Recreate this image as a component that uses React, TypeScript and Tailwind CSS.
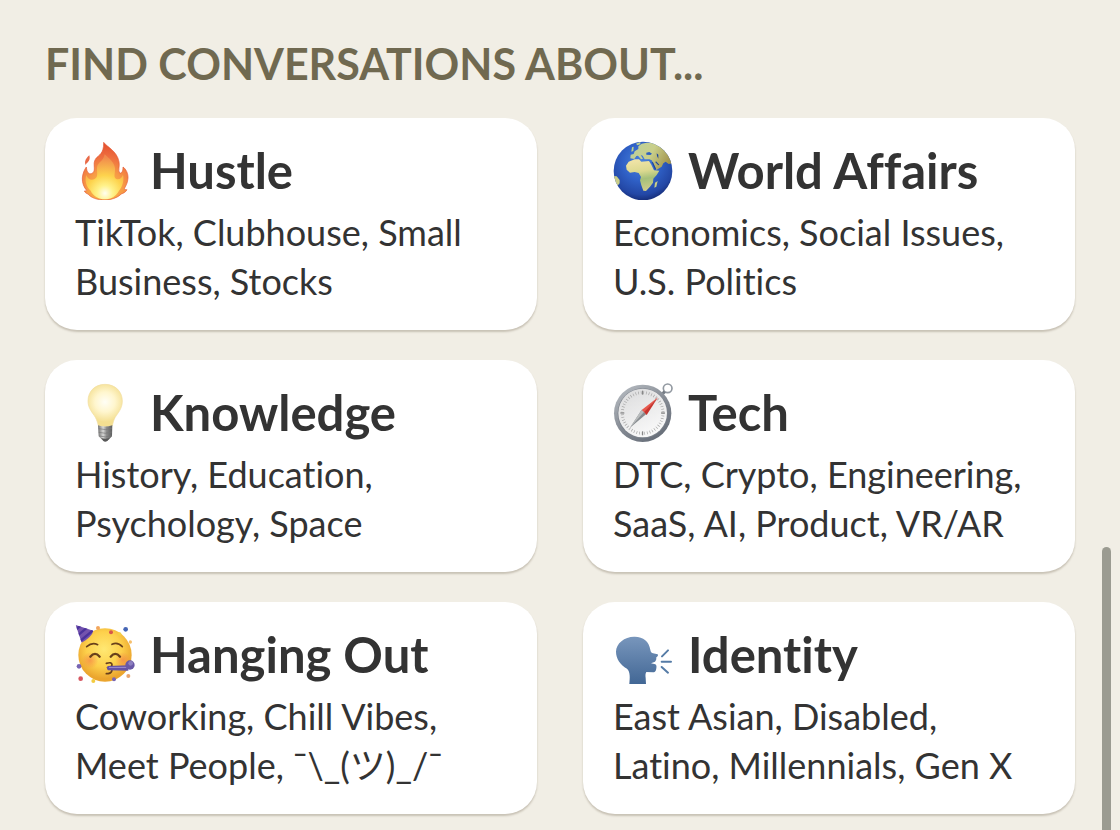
import React from "react";

const FireIcon = () => (
  <svg viewBox="30 24 180 180" className="size-15 shrink-0" aria-hidden="true">
    <defs>
      <radialGradient id="fireOuter" cx="120" cy="170" r="135" gradientUnits="userSpaceOnUse">
        <stop offset="0" stopColor="#fdd04a" />
        <stop offset="0.4" stopColor="#f79a45" />
        <stop offset="0.7" stopColor="#ee7040" />
        <stop offset="1" stopColor="#e5502f" />
      </radialGradient>
      <radialGradient id="fireInner" cx="120" cy="184" r="108" gradientUnits="userSpaceOnUse">
        <stop offset="0" stopColor="#fffef0" />
        <stop offset="0.22" stopColor="#fff28a" />
        <stop offset="0.5" stopColor="#fdd34d" />
        <stop offset="1" stopColor="#f18a4c" />
      </radialGradient>
    </defs>
    <path
      fill="url(#fireOuter)"
      stroke="#e45c3a"
      strokeWidth="2"
      d="M116 31c10 14 40 26 46 58 3 15-4 25 2 34 7 2 10-7 10-18 9 6 16 20 15 34-1 15-8 25-11 31 2 3 6 3 8 3-4 8-12 11-17 13-12 12-32 18-50 18-22 0-42-7-50-18-4-1-9-4-11-9 3 0 6 0 7-2-8-8-14-23-13-37 1-13 6-25 12-33 1 8 2 17 9 20 8 2 15-4 15-14 0-14-3-20 5-32 7-9 24-13 23-48z"
    />
    <path
      fill="url(#fireInner)"
      d="M119 67c12 11 30 25 31 42 1 16-6 27 4 32 9 4 17-5 20-13 4 18-2 36-12 48-9 17-25 26-42 26-19 0-36-10-43-26-12-10-19-29-13-47 4 12 15 18 25 12 12-7 6-20 7-34 1-16 20-19 23-40z"
    />
    <path fill="#e96a48" d="M73 70c3 10 0 15-4 20-3 4-5 4-7 9-6-12 4-23 11-29z" />
  </svg>
);

const GlobeIcon = () => (
  <svg viewBox="27 24 180 180" className="size-15 shrink-0" aria-hidden="true">
    <defs>
      <radialGradient id="ocean" cx="112" cy="90" r="115" gradientUnits="userSpaceOnUse">
        <stop offset="0" stopColor="#4a83dc" />
        <stop offset="0.5" stopColor="#2f60c6" />
        <stop offset="0.85" stopColor="#2347a5" />
        <stop offset="1" stopColor="#172f7c" />
      </radialGradient>
      <linearGradient id="africa" x1="110" y1="84" x2="125" y2="178" gradientUnits="userSpaceOnUse">
        <stop offset="0" stopColor="#efe3a6" />
        <stop offset="0.35" stopColor="#dcd990" />
        <stop offset="0.6" stopColor="#a5c07a" />
        <stop offset="1" stopColor="#d3cd8c" />
      </linearGradient>
      <linearGradient id="eurasia" x1="85" y1="45" x2="190" y2="100" gradientUnits="userSpaceOnUse">
        <stop offset="0" stopColor="#bcd09a" />
        <stop offset="0.5" stopColor="#c9cf8a" />
        <stop offset="1" stopColor="#a3954d" />
      </linearGradient>
      <clipPath id="globeClip">
        <circle cx="117" cy="117" r="88" />
      </clipPath>
    </defs>
    <circle cx="117" cy="117" r="88" fill="url(#ocean)" />
    <g clipPath="url(#globeClip)" strokeLinejoin="round">
      <path
        fill="url(#eurasia)"
        d="M79 79l1-11 9-2 3-8 11-7 0-8 10-8 15-3 24 0 24 12 17 22 12 28-11 2-9-7-7 5-5 10-16 10-10-22-4-7-7-3-14 0-6-11-6-2 7 11-6 2-9-11-5 1-6 9z"
      />
      <path
        fill="url(#africa)"
        d="M66 101l8-12 18-7 13 0 7 7 23-2 7 11 8 17 16 1-8 13-10 11-1 12-9 12-12 13-8-1-6-16-4-15 3-10-7-12-12-3-14 2-10-9z"
      />
      <path fill="#2c5fc0" d="M127 62l9-2 8 5-5 4-12-1z" />
      <path fill="#1f469b" d="M158 64l5 4 0 12-4-8zM143 90l4 1 9 19-3 3z" />
      <path fill="#1f469b" d="M156 88l10 10-3 2-9-9z" />
      <path fill="#c9cd88" d="M153 152l8-5-4 17-6 3zM29 132l9 1 9 11 0 10-9 10-5-6z" />
      <path fill="#bed18d" d="M84 46l5-2-1 13-6 2zM96 35l13-5 0 7-9 3z" />
    </g>
  </svg>
);

const BulbIcon = () => (
  <svg viewBox="30 24 180 180" className="size-15 shrink-0" aria-hidden="true">
    <defs>
      <radialGradient id="glass" cx="120" cy="84" r="60" gradientUnits="userSpaceOnUse">
        <stop offset="0" stopColor="#fffef6" />
        <stop offset="0.5" stopColor="#fff6ce" />
        <stop offset="1" stopColor="#f4df91" />
      </radialGradient>
      <linearGradient id="screw" x1="100" y1="0" x2="141" y2="0" gradientUnits="userSpaceOnUse">
        <stop offset="0" stopColor="#777" />
        <stop offset="0.35" stopColor="#d7d7d5" />
        <stop offset="0.6" stopColor="#8b8b8b" />
        <stop offset="1" stopColor="#5f6060" />
      </linearGradient>
    </defs>
    <path
      fill="url(#glass)"
      stroke="#f1dea0"
      strokeWidth="2"
      d="M120 31c31 0 52 22 52 50 0 24-14 36-22 50-5 9-6 17-8 24-6 4-36 4-42 0-2-7-4-16-9-25-8-14-22-26-22-49 0-28 20-50 51-50z"
    />
    <path fill="url(#screw)" d="M99 154q21 7 43 0l-1 33-10 10q-10 8-20 0l-10-10z" />
    <path stroke="#777" strokeWidth="2" fill="none" d="M101 164q20 6 40-1M101 175q20 6 40-1M103 186q18 6 37-1" />
    <path fill="#585858" d="M108 192q13 5 26 0l-7 9q-7 4-12 0z" />
  </svg>
);

const CompassIcon = () => (
  <svg viewBox="27 24 180 180" className="size-15 shrink-0" aria-hidden="true">
    <defs>
      <linearGradient id="rim" x1="60" y1="40" x2="170" y2="200" gradientUnits="userSpaceOnUse">
        <stop offset="0" stopColor="#b2b7bd" />
        <stop offset="0.5" stopColor="#858b94" />
        <stop offset="1" stopColor="#646b76" />
      </linearGradient>
      <linearGradient id="dial" x1="80" y1="50" x2="150" y2="190" gradientUnits="userSpaceOnUse">
        <stop offset="0" stopColor="#dededf" />
        <stop offset="1" stopColor="#fbfbfb" />
      </linearGradient>
    </defs>
    <circle cx="191" cy="43" r="13" fill="none" stroke="#9299a1" strokeWidth="5" />
    <path stroke="#747b84" strokeWidth="9" d="M173 62l9-9" />
    <circle cx="116" cy="118" r="86" fill="url(#rim)" />
    <circle cx="116" cy="118" r="75" fill="#7b818a" />
    <circle cx="116" cy="117" r="73" fill="url(#dial)" />
    <circle cx="116" cy="117" r="61" fill="none" stroke="#a5a5a5" strokeWidth="9" strokeDasharray="2 6" />
    <path stroke="#777" strokeWidth="3" d="M116 50v12M116 172v12M49 117h12M171 117h12" />
    <path fill="#888d91" d="M113 107l14 13-49 41z" />
    <path fill="#b9bcbd" d="M113 107l7 7-42 47z" />
    <path fill="#e8584d" d="M162 70l-49 38 8 7z" />
    <path fill="#c8332d" d="M162 70l-34 53-8-9z" />
  </svg>
);

const PartyIcon = () => (
  <svg viewBox="30 24 180 180" className="size-15 shrink-0" aria-hidden="true">
    <defs>
      <radialGradient id="face" cx="117" cy="100" r="88" gradientUnits="userSpaceOnUse">
        <stop offset="0" stopColor="#ffe873" />
        <stop offset="0.6" stopColor="#fdd04b" />
        <stop offset="1" stopColor="#eba52e" />
      </radialGradient>
      <radialGradient id="cheek">
        <stop offset="0" stopColor="#f58548" stopOpacity="0.7" />
        <stop offset="1" stopColor="#f58548" stopOpacity="0" />
      </radialGradient>
      <clipPath id="hatClip">
        <path d="M32 27l53 17q-4 18-35 36z" />
      </clipPath>
    </defs>
    <circle cx="120" cy="117" r="80" fill="url(#face)" />
    <circle cx="75" cy="133" r="25" fill="url(#cheek)" />
    <circle cx="174" cy="132" r="24" fill="url(#cheek)" />
    <g clipPath="url(#hatClip)">
      <path fill="#7353ae" d="M30 24h60v60h-60z" />
      <path stroke="#4b329c" strokeWidth="7" d="M29 44l24-20M35 61l38-32M42 78l48-40" />
    </g>
    <g fill="none" stroke="#69401b" strokeLinecap="round">
      <path strokeWidth="5" d="M65 92q17-15 33-6M141 85q17-8 31 7" />
      <path strokeWidth="7" d="M76 122q14-17 28 0M137 122q14-17 28 0" />
      <path strokeWidth="5" d="M124 142q17-5 17 4 0 6-9 9 12 3 8 11-3 7-16 7" />
    </g>
    <path fill="#6552a4" d="M128 150l62-2v16l-61-1q-6-6-1-13z" />
    <path fill="#9686ca" d="M132 153l54-1v4l-54 0z" />
    <circle cx="195" cy="147" r="14" fill="#6958a6" />
    <circle cx="197" cy="142" r="7" fill="#8d80c0" />
    <circle cx="42" cy="151" r="7" fill="#7865b3" />
    <circle cx="182" cy="40" r="7" fill="#4565b4" />
    <circle cx="138" cy="49" r="6" fill="#d7574a" />
    <circle cx="164" cy="54" r="5" fill="#f2d044" />
    <circle cx="99" cy="36" r="6" fill="#f2a65d" />
    <circle cx="196" cy="78" r="5" fill="#f6bf6c" />
    <circle cx="47" cy="188" r="7" fill="#d65660" />
    <circle cx="85" cy="195" r="6" fill="#f3cc41" />
    <circle cx="147" cy="190" r="6" fill="#7865b3" />
    <circle cx="190" cy="180" r="6" fill="#e9a46c" />
  </svg>
);

const SpeakingIcon = () => (
  <svg viewBox="27 24 180 180" className="size-15 shrink-0" aria-hidden="true">
    <defs>
      <linearGradient id="head" x1="0" y1="62" x2="0" y2="204" gradientUnits="userSpaceOnUse">
        <stop offset="0" stopColor="#7896bc" />
        <stop offset="1" stopColor="#426795" />
      </linearGradient>
    </defs>
    <path
      fill="url(#head)"
      d="M90 62c27-1 45 14 49 39 1 6 2 9 8 11l14 3c3 2-1 8-4 9 0 6 0 9-4 13l-12 5 13 3c4 2 4 7 3 12-1 7-2 12-10 12l-20-1c-3 5-3 10-2 18l1 18H76c2-20 3-36-7-46-20-12-33-30-33-51 0-25 26-45 54-45z"
    />
    <path stroke="#557ba6" strokeWidth="6" strokeLinecap="round" d="M174 121l18-18M173 137h28M173 153l19 17" />
  </svg>
);

const topics = [
  { title: "Hustle", icon: <FireIcon />, text: "TikTok, Clubhouse, Small Business, Stocks" },
  { title: "World Affairs", icon: <GlobeIcon />, text: "Economics, Social Issues, U.S. Politics" },
  { title: "Knowledge", icon: <BulbIcon />, text: "History, Education, Psychology, Space" },
  { title: "Tech", icon: <CompassIcon />, text: "DTC, Crypto, Engineering, SaaS, AI, Product, VR/AR" },
  { title: "Hanging Out", icon: <PartyIcon />, text: "Coworking, Chill Vibes, Meet People, ¯\\_(ツ)_/¯" },
  { title: "Identity", icon: <SpeakingIcon />, text: "East Asian, Disabled, Latino, Millennials, Gen X" },
];

const App = () => {
  return (
    <main className="min-h-screen bg-[#f1eee5] px-[45px] pt-10 pb-4 font-['Lato','Noto_Sans_CJK_JP',sans-serif] text-[#333333] [font-variant-ligatures:no-common-ligatures]">
      <h1 className="text-[43px] leading-12 font-bold text-[#706950]">
        FIND CONVERSATIONS ABOUT...
      </h1>

      <div className="mt-[30px] grid grid-cols-2 gap-x-[46px] gap-y-[30px]">
        {topics.map((topic) => (
          <a
            key={topic.title}
            href="#"
            className="rounded-[32px] bg-white pt-[22px] pr-8 pb-6 pl-[30px] shadow-[0_2px_2px_rgba(80,65,40,0.25)]"
          >
            <div className="flex items-center gap-[15px]">
              {topic.icon}
              <h2 className="text-[49px] leading-15 font-bold whitespace-nowrap">{topic.title}</h2>
            </div>
            <p className="mt-2 text-4xl leading-[49px]">{topic.text}</p>
          </a>
        ))}
      </div>

      {/* scroll indicator */}
      <div className="fixed top-[547px] right-[9px] bottom-0 w-[9px] rounded-t-full bg-[#9b9b91]" />
    </main>
  );
};

export default App;
